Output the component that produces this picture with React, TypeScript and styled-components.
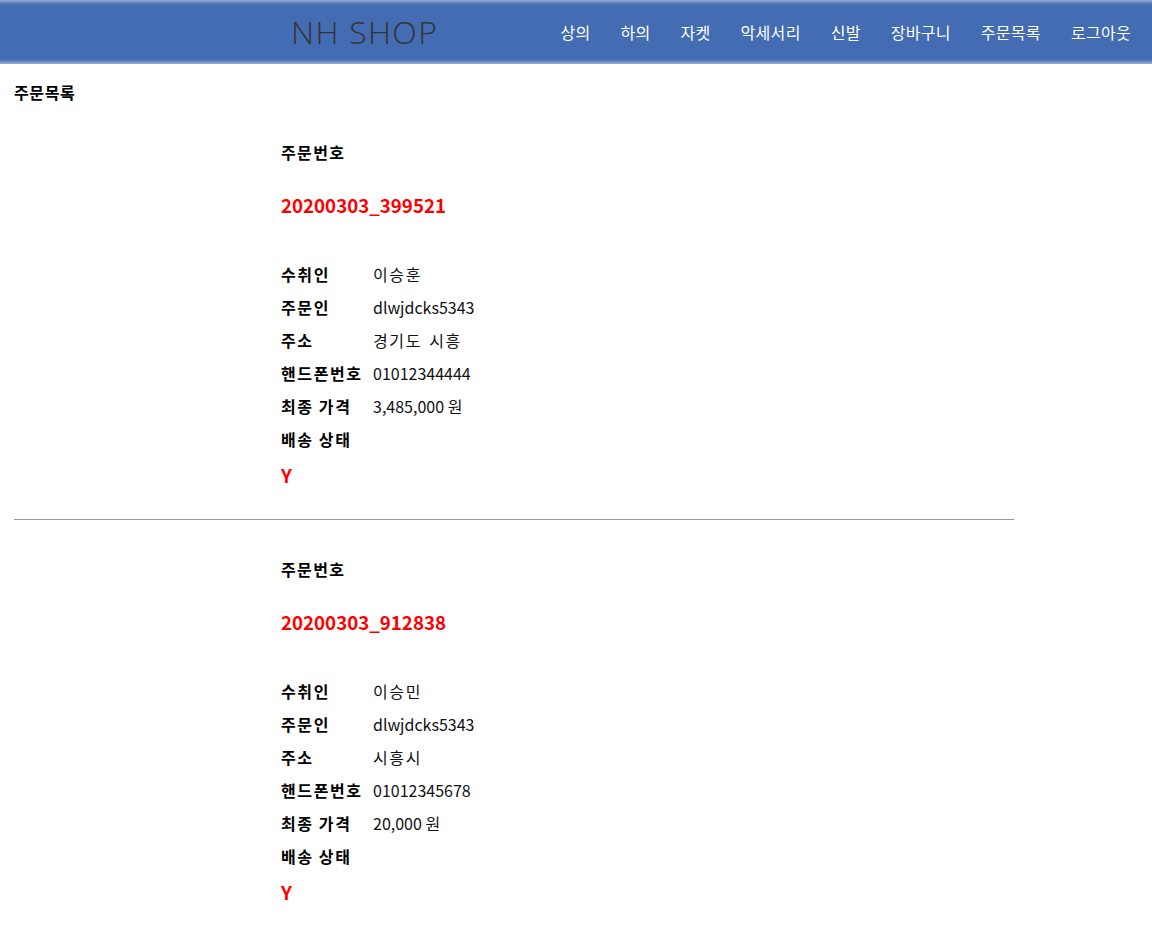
import React, { Fragment } from "react"
import styled, { createGlobalStyle } from "styled-components"

type Order = {
  orderNo: string
  receiver: string
  buyer: string
  address: string
  phone: string
  price: string
  status: string
}

const menus = ["상의", "하의", "자켓", "악세서리", "신발", "장바구니", "주문목록", "로그아웃"]

const orders: Order[] = [
  {
    orderNo: "20200303_399521",
    receiver: "이승훈",
    buyer: "dlwjdcks5343",
    address: "경기도 시흥",
    phone: "01012344444",
    price: "3,485,000 원",
    status: "Y",
  },
  {
    orderNo: "20200303_912838",
    receiver: "이승민",
    buyer: "dlwjdcks5343",
    address: "시흥시",
    phone: "01012345678",
    price: "20,000 원",
    status: "Y",
  },
]

const App: React.FC = () => (
  <Fragment>
    <GlobalStyle />
    <Header>
      <Logo>NH SHOP</Logo>
      <Nav>
        {menus.map(menu => (
          <NavItem key={menu}>{menu}</NavItem>
        ))}
      </Nav>
    </Header>
    <Main>
      <PageTitle>주문목록</PageTitle>
      {orders.map(order => (
        <Fragment key={order.orderNo}>
          <OrderBlock>
            <OrderLabel>주문번호</OrderLabel>
            <RedText gap={27}>{order.orderNo}</RedText>
            <InfoGrid>
              <InfoLabel>수취인</InfoLabel>
              <InfoValue hangul>{order.receiver}</InfoValue>
              <InfoLabel>주문인</InfoLabel>
              <InfoValue>{order.buyer}</InfoValue>
              <InfoLabel>주소</InfoLabel>
              <InfoValue hangul>{order.address}</InfoValue>
              <InfoLabel>핸드폰번호</InfoLabel>
              <InfoValue>{order.phone}</InfoValue>
              <InfoLabel>최종 가격</InfoLabel>
              <InfoValue>{order.price}</InfoValue>
              <InfoLabel>배송 상태</InfoLabel>
              <InfoValue />
            </InfoGrid>
            <RedText gap={6}>{order.status}</RedText>
          </OrderBlock>
          <Divider />
        </Fragment>
      ))}
    </Main>
  </Fragment>
)

const GlobalStyle = createGlobalStyle`
  body {
    margin: 0;
    background: #fff;
    color: #000;
    font-family: "Noto Sans CJK KR", "Noto Sans", sans-serif;
  }
`

const Header = styled.header`
  display: flex;
  align-items: center;
  height: 64px;
  background: linear-gradient(
    to bottom,
    #9aafd6 0,
    #4a72b5 4px,
    #436cb2 6px,
    #436cb2 58px,
    #4a72b5 60px,
    #9aafd6 64px
  );
`

const Logo = styled.h1`
  margin: 0 0 0 291px;
  font-family: "Open Sans", "Noto Sans", sans-serif;
  font-weight: 300;
  font-size: 32px;
  line-height: 40px;
  letter-spacing: 1.3px;
  color: #333;
`

const Nav = styled.nav`
  display: flex;
  gap: 30px;
  margin-left: auto;
  padding-right: 21px;
`

const NavItem = styled.a`
  font-size: 16px;
  line-height: 22px;
  letter-spacing: 0.3px;
  color: #fff;
  cursor: pointer;
`

const Main = styled.main`
  padding: 0 14px;
`

const PageTitle = styled.h2`
  margin: 0;
  padding-top: 17px;
  font-size: 16px;
  line-height: 22px;
  font-weight: 700;
  letter-spacing: 0.6px;
`

const OrderBlock = styled.section`
  padding: 37px 0 0 267px;
`

const OrderLabel = styled.div`
  font-size: 16px;
  line-height: 24px;
  font-weight: 700;
  letter-spacing: 1.4px;
`

const RedText = styled.div<{ gap: number }>`
  margin-top: ${p => p.gap}px;
  font-size: 18.7px;
  line-height: 28px;
  font-weight: 700;
  color: #ff0000;
`

const InfoGrid = styled.div`
  display: grid;
  grid-template-columns: 92px auto;
  grid-auto-rows: 33px;
  align-items: center;
  margin-top: 38px;
`

const InfoLabel = styled.span`
  font-size: 16px;
  font-weight: 700;
  letter-spacing: 1.6px;
  white-space: nowrap;
`

const InfoValue = styled.span<{ hangul?: boolean }>`
  font-size: 16px;
  color: #111;
  letter-spacing: ${p => (p.hangul ? "1.6px" : "0")};
  word-spacing: ${p => (p.hangul ? "2px" : "0")};
`

const Divider = styled.hr`
  width: 1000px;
  margin: 30px 0 0;
  border: 0;
  border-top: 1px solid #999;
`

export default App
